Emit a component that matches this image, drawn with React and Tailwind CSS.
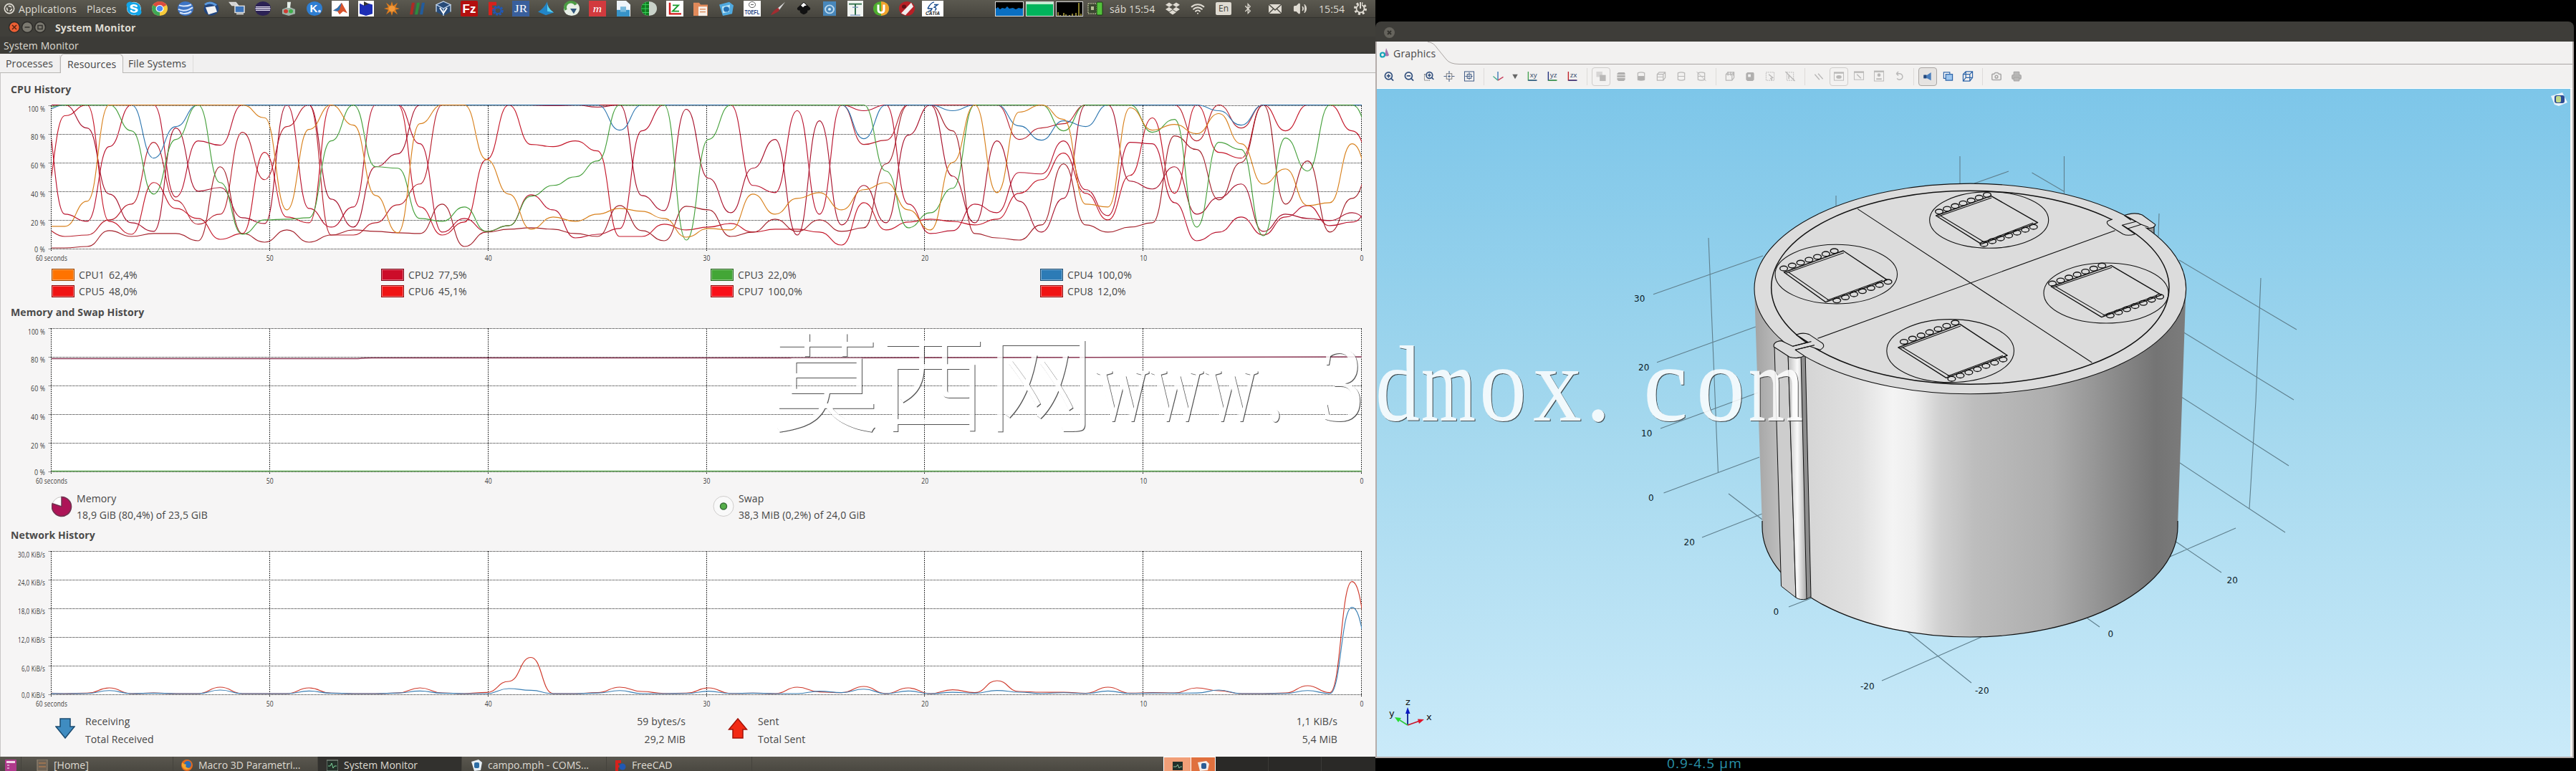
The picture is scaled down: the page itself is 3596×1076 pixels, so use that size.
import { FaSkype, FaDropbox, FaBluetoothB } from "react-icons/fa";
import {
  Wifi,
  Volume2,
  ZoomIn,
  ZoomOut,
  Camera,
  Printer,
} from "lucide-react";

// Chart geometry shared by the three history plots
const LEFT = 72;
const RIGHT = 1901;
const TOP = 7.5;
const BOTTOM = 207.5;

const CPU = [
  {
    color: "#b9222f",
    values: [14, 8.5, 9.5, 20, 31, 74, 33.5, 17, 24, 81, 48, 85, 100, 9.5, 9.5, 18, 30.5, 45, 100, 100, 100, 100, 100, 99.5, 100, 100, 100, 100, 100, 100, 100, 100, 100, 100, 100, 100, 100, 72.5, 75.5, 100, 100, 100, 100, 100, 76, 84, 87, 100, 100, 100, 100, 100, 75, 100, 84, 100, 100, 100, 100, 100, 100],
  },
  {
    color: "#b9142f",
    values: [98, 24, 19, 71, 100, 100, 36, 75, 72, 100, 100, 100, 28, 15, 29, 100, 100, 73, 11.5, 21, 12, 16, 37.5, 27, 7.5, 10, 14, 82, 100, 100, 100, 100, 44, 39, 96, 24, 100, 96, 100, 31, 10.5, 12.5, 31, 25, 53, 52, 75, 41, 23, 74, 73, 32, 5.5, 11.5, 22, 9.5, 22, 30, 16, 18.5, 30],
  },
  {
    color: "#c4182a",
    values: [32, 92.5, 100, 19, 10, 46, 28, 21, 6.5, 10.5, 67, 22, 18, 100, 100, 100, 100, 29, 9.5, 18.5, 62, 100, 72.5, 71, 75, 68, 8.5, 8.5, 17, 13, 15, 17.5, 11.5, 13.5, 13.5, 11.5, 2.5, 32, 13, 18.5, 20.5, 19, 16.5, 20.5, 38.5, 48, 66.5, 38.5, 20, 51, 91, 38.5, 100, 67, 63, 100, 82, 100, 100, 82, 62],
  },
  {
    color: "#a3202a",
    values: [0.5, 0.5, 1.5, 12.5, 8.5, 10.5, 10.5, 5.5, 57, 10.5, 4.5, 13, 4.5, 9.5, 13, 12, 11, 10.5, 31, 1.5, 11.5, 13.5, 14.5, 13.5, 10.5, 8.5, 30, 12.5, 5.5, 29.5, 27, 8.5, 11.5, 20.5, 12, 20, 12, 14.5, 59, 100, 100, 82, 10.5, 7.5, 6, 16.5, 59, 16.5, 11.5, 15, 18, 78.5, 69, 34, 60, 100, 31, 61, 11.5, 35, 60],
  },
  {
    color: "#a8122c",
    values: [100, 100, 84, 38, 18, 12, 84, 40, 42.5, 21.5, 17.5, 100, 100, 34.5, 15, 57, 66, 100, 100, 100, 100, 100, 100, 99.5, 100, 98.5, 100, 37, 26.5, 97, 49, 25, 56, 76, 9.5, 89, 16.5, 44, 18, 79, 100, 50.5, 18, 75, 33, 11.5, 35, 100, 100, 47, 41.5, 57, 24, 35.5, 45, 12, 24, 21, 19.5, 25, 17],
  },
  {
    color: "#2f77b0",
    values: [96, 100, 100, 100, 100, 63, 85, 100, 100, 100, 100, 100, 100, 100, 100, 100, 100, 100, 100, 100, 100, 100, 100, 100, 100, 100, 82.5, 100, 100, 100, 100, 100, 100, 100, 100, 100, 100, 76.5, 100, 100, 100, 96, 100, 100, 85.5, 75.5, 89, 85, 100, 100, 100, 100, 100, 96, 86, 100, 100, 100, 100, 100, 100],
  },
  {
    color: "#46a03c",
    values: [98, 100, 100, 100, 82, 38, 76, 100, 46, 10, 20, 20.5, 21.5, 75, 100, 57, 56, 21, 19, 29, 12, 16, 36.5, 44, 50, 61, 100, 100, 100, 6, 76, 100, 100, 100, 100, 100, 100, 100, 54, 14.5, 25, 42, 100, 100, 100, 100, 82, 100, 100, 100, 81, 90, 15, 74, 69, 9, 77, 54, 100, 100, 78],
  },
  {
    color: "#d8801c",
    values: [15.5, 15.5, 33, 100, 100, 100, 100, 100, 100, 100, 91, 27, 83, 100, 86, 37, 11, 87, 100, 100, 62, 38, 13.5, 22, 19, 24, 28, 26, 21, 8, 14, 13, 38, 24, 35, 39, 27, 41, 46, 27, 13, 60, 100, 39, 95, 100, 90, 31, 29, 98, 82.5, 86.5, 80, 94, 73, 45, 55.5, 30, 32, 73, 46],
  },
];

const NETWORK = [
  {
    color: "#cf3a2c",
    values: [1, 0.5, 0.8, 4.5, 0.5, 0.9, 0.5, 0.5, 5, 0.5, 0.5, 0.5, 4.5, 0.8, 0.5, 0.5, 0.9, 4.5, 1, 0.5, 1.3, 9, 25.7, 0.5, 0.5, 1.2, 5, 2, 0.6, 0.8, 4.5, 0.6, 0.8, 0.5, 5, 1.7, 1.2, 5.5, 0.5, 4.5, 0.5, 3.2, 1.2, 9.5, 2, 1.5, 1.4, 0.7, 5, 0.8, 1.2, 1, 4.5, 2.5, 0.5, 0.5, 0.9, 6, 1.2, 78.5, 30],
  },
  {
    color: "#3a7fb4",
    values: [0.6, 0.5, 0.6, 2.6, 0.5, 0.8, 0.5, 0.5, 3, 0.5, 0.5, 0.5, 2.3, 0.8, 0.5, 0.5, 0.9, 2.3, 0.8, 0.5, 0.5, 4, 2.8, 0.5, 0.5, 0.9, 2.6, 0.5, 0.5, 0.6, 2.2, 0.6, 0.8, 0.5, 0.5, 2.2, 1.2, 3.6, 0.5, 2.3, 0.5, 1.4, 0.8, 2.7, 1.5, 0.6, 1.1, 0.6, 2.3, 0.6, 0.9, 0.8, 0.9, 3, 0.5, 0.5, 0.6, 2.6, 0.5, 60.5, 22],
  },
];

const LEGEND = [
  ["CPU1", "62,4%", "bg-[#ff7300]", "border-[#9a4500]"],
  ["CPU2", "77,5%", "bg-[#cc0c29]", "border-[#7b0718]"],
  ["CPU3", "22,0%", "bg-[#43a636]", "border-[#286420]"],
  ["CPU4", "100,0%", "bg-[#2c7bb6]", "border-[#1a4a6e]"],
  ["CPU5", "48,0%", "bg-[#f01414]", "border-[#900c0c]"],
  ["CPU6", "45,1%", "bg-[#f01414]", "border-[#900c0c]"],
  ["CPU7", "100,0%", "bg-[#f91019]", "border-[#900c0c]"],
  ["CPU8", "12,0%", "bg-[#f01414]", "border-[#900c0c]"],
];

const yOf = (v) => BOTTOM - 0.5 - v * 2.005;

function curve(values) {
  const x0 = 59.6;
  const step = 30.98;
  let d = `M${x0},${yOf(values[0])}`;
  for (let i = 1; i < values.length; i++) {
    const x = x0 + step * i;
    const mid = x - step / 2;
    d += ` C${mid},${yOf(values[i - 1])} ${mid},${yOf(values[i])} ${x},${yOf(values[i])}`;
  }
  return d;
}

function Chart({ id, labels, labelWidths, children }) {
  const ticks = ["60 seconds", "50", "40", "30", "20", "10", "0"];
  return (
    <svg width="1916" height="230" className="block" fontFamily="Open Sans, sans-serif">
      <clipPath id={id}>
        <rect x={LEFT} y="0" width={RIGHT - LEFT} height="212" />
      </clipPath>
      <rect x={LEFT} y={TOP} width={RIGHT - LEFT} height={BOTTOM - TOP} fill="#fff" />
      <g stroke="#000" strokeWidth="1">
        {labels.map((l, i) => (
          <line key={l} x1={LEFT - 4} x2={RIGHT} y1={TOP + i * 40} y2={TOP + i * 40} strokeDasharray="1 1" opacity="0.85" />
        ))}
        {ticks.map((t, i) => {
          const x = Math.round(LEFT + (i * (RIGHT - LEFT)) / 6) - 0.5;
          return <line key={t} x1={x} x2={x} y1={TOP} y2={BOTTOM + 3} strokeDasharray="1.5 1.5" />;
        })}
      </g>
      <g clipPath={`url(#${id})`} fill="none" strokeWidth="1.15">
        {children}
      </g>
      <g fontSize="10" fill="#3c3c3c">
        {labels.map((l, i) => (
          <text
            key={l}
            x="63"
            y={i === 0 ? 15.5 : i === 5 ? 211.5 : 14.5 + i * 40}
            textAnchor="end"
            textLength={labelWidths[i]}
            lengthAdjust="spacingAndGlyphs"
          >
            {l}
          </text>
        ))}
        {ticks.map((t, i) => (
          <text
            key={t}
            x={LEFT + (i * (RIGHT - LEFT)) / 6}
            y="223.5"
            textAnchor="middle"
            textLength={i === 0 ? 44 : i === 6 ? 5 : 10}
            lengthAdjust="spacingAndGlyphs"
          >
            {t}
          </text>
        ))}
      </g>
    </svg>
  );
}

function Heading({ children }) {
  return <h2 className="h-6 pl-[14px] text-[14px] leading-6 font-bold text-[#4a4a4a]">{children}</h2>;
}

const PERCENT = ["100 %", "80 %", "60 %", "40 %", "20 %", "0 %"];
const RATES = ["30,0 KiB/s", "24,0 KiB/s", "18,0 KiB/s", "12,0 KiB/s", "6,0 KiB/s", "0,0 KiB/s"];

/* Launchers, drawn in a 24x24 box */
const LAUNCHERS = [
  <g><circle cx="12" cy="12" r="10" fill="#fff" /><FaSkype x="0" y="0" size={24} color="#12a5e8" /></g>,
  <g><circle cx="12" cy="12" r="11" fill="#f7cb3b" /><path d="M12 12L2.5 6.500A11 11 0 0121.500 6.500z" fill="#dd4b3e" /><path d="M12 12L2.500 6.500A11 11 0 0012 23z" fill="#3fa757" /><circle cx="12" cy="12" r="5.500" fill="#fff" /><circle cx="12" cy="12" r="4.300" fill="#4a8af4" /></g>,
  <g><circle cx="12" cy="12" r="11" fill="#3d74c4" /><path d="M3 7q8 3 17-1M2 13q10 5 20-3M4 18q9 4 16-2" stroke="#dbe8fa" strokeWidth="2.200" fill="none" /></g>,
  <g><circle cx="12" cy="12" r="10.500" fill="#21457f" /><path d="M4 10l13-2 3 9-12 4z" fill="#f2f2f2" /><path d="M3 6q7-6 16 1" stroke="#5c9ade" strokeWidth="3" fill="none" /></g>,
  <g><rect x="9" y="8" width="13" height="10" fill="#3a72b8" stroke="#ddd" strokeWidth="1.500" /><path d="M2 3h8l3 4H5zM11 20h10" stroke="#ddd" strokeWidth="2" fill="#ccc" /></g>,
  <g><circle cx="12" cy="12" r="11" fill="#2c2255" /><path d="M2 9.500h20M1.500 12h21M2 14.500h20" stroke="#e8e4f4" strokeWidth="1.400" /></g>,
  <g><path d="M3 13l9-4 9 4v7l-9 3-9-3z" fill="#9fb3a8" /><path d="M10 2h5l-1 9h-4z" fill="#e6efe9" /><circle cx="8" cy="16" r="3" fill="#cf3c32" /><circle cx="15" cy="16" r="3" fill="#3fae4a" /></g>,
  <g><circle cx="12" cy="12" r="11" fill="#2e7ed2" /><text x="11" y="18" fontSize="15" fontWeight="bold" textAnchor="middle" fill="#fff">K</text><circle cx="19" cy="16" r="2" fill="#cfe2ff" /></g>,
  <g><rect width="24" height="24" fill="#fff" /><path d="M2 15l6-4L14 3l8 16-6-3-5 5-3-5z" fill="#d9532c" /><path d="M2 15l6-4 6-8-3 11-3 2z" fill="#3172b0" /></g>,
  <g><rect x="1" width="22" height="24" fill="#fff" /><path d="M3 4l6 3 6-3 6 2v14l-9 3-9-3z" fill="#1c2db4" /><path d="M9 1l7 4-7 3z" fill="#333" /></g>,
  <g><path d="M12 1l2 7 6-5-3 7 6 2-6 2 3 7-6-5-2 7-2-7-6 5 3-7-6-2 6-2-3-7 6 5z" fill="#dd7c1d" /><circle cx="12" cy="12" r="4.500" fill="#f1993b" /></g>,
  <g><path d="M4 3h4L5 21H1z" fill="#ad2a24" /><path d="M11 3h4l-3 18H8z" fill="#2d8b3e" /><path d="M18 3h4l-3 18h-4z" fill="#235c9c" /></g>,
  <g><path d="M12 1l10 5v11l-10 6-10-6V6z" fill="#284b78" /><path d="M12 1l10 5-10 6L2 6zM12 12v11M2 6v11M22 6v11" stroke="#c4d9f2" strokeWidth="1.300" fill="none" /><path d="M7 11l5 8 5-8" stroke="#fff" strokeWidth="2" fill="none" /></g>,
  <g><rect width="24" height="24" rx="2" fill="#b30f0f" /><text x="12" y="19" fontSize="18" fontWeight="bold" textAnchor="middle" textLength="19" lengthAdjust="spacingAndGlyphs" fill="#fff">Fz</text></g>,
  <g><path d="M3 2h11v5H8v4h5v4H8v7H3z" fill="#d8211c" /><circle cx="16" cy="15" r="6" fill="none" stroke="#2158b4" strokeWidth="3.500" strokeDasharray="3 1.500" /><circle cx="16" cy="15" r="4.500" fill="none" stroke="#2158b4" strokeWidth="2" /></g>,
  <g><rect width="24" height="24" fill="#395f9c" /><text x="12" y="18" fontSize="17" fontFamily="Liberation Serif, serif" textAnchor="middle" fill="#fff">JR</text></g>,
  <g><path d="M14 1q-1 9 9 17l-11 4-11-5Q9 12 14 1z" fill="#2285c7" /><path d="M14 1q-1 9 9 17l-9-2z" fill="#5bd0ef" /></g>,
  <g><circle cx="12" cy="12" r="11" fill="#e7efe6" /><path d="M4 14a8 8 0 0114-8" stroke="#4b9b44" strokeWidth="4" fill="none" /><path d="M10 12h9l-4 8z" fill="#31567c" /></g>,
  <g><rect width="24" height="24" fill="#d23a3e" /><text x="12" y="17" fontSize="17" fontFamily="Liberation Serif, serif" fontStyle="italic" textAnchor="middle" fill="#fff">m</text></g>,
  <g><path d="M3 0h13l6 6v18H3z" fill="#eef5fa" /><rect x="3" y="14" width="18" height="10" fill="#3793c8" /><rect x="8" y="9" width="8" height="8" fill="#79b9dc" /></g>,
  <g><circle cx="12" cy="12" r="11" fill="#c9d2c9" /><path d="M12 1a11 11 0 000 22z" fill="#0f7a1f" /><path d="M1 12h11M3 6h9M3 18h9M7 2v20" stroke="#3cd45c" strokeWidth="1" /></g>,
  <g><rect width="24" height="24" fill="#fff" /><path d="M5 3v17h16" stroke="#d21b1b" strokeWidth="2.500" fill="none" /><path d="M9 7h8L9 16h9" stroke="#1b9b2d" strokeWidth="2" fill="none" /></g>,
  <g><path d="M2 3h8l2 3h10v17H2z" fill="#e28a5a" /><rect x="9" y="9" width="12" height="14" fill="#f7efe9" /><path d="M11 13h8M11 17h8" stroke="#d9824f" strokeWidth="1.500" /></g>,
  <g><path d="M2 6l14-4 6 5-2 13-13 3z" fill="#4fa9df" /><path d="M6 9l11-3-1 11-9 2z" fill="#bce5f8" /><circle cx="12" cy="13" r="4" fill="#2671b3" /></g>,
  <g><rect width="24" height="24" fill="#fff" /><circle cx="12" cy="6" r="4.500" fill="none" stroke="#555" /><path d="M10 6h4" stroke="#555" /><text x="12" y="21" fontSize="9" fontWeight="bold" textAnchor="middle" textLength="21" lengthAdjust="spacingAndGlyphs" fill="#1c3d80">TOEFL</text></g>,
  <g><path d="M22 2L14 14l-3-2z" fill="#ddd" /><path d="M12 11q3 2 1 5-4 3-11 6 4-8 10-11z" fill="#a22c30" /></g>,
  <g><path d="M12 2l9 9q1 4-4 4 2 3-5 6-7-3-5-6-5 0-4-4z" fill="#111" /><path d="M12 3l4 4-3 1-2 2-3-3z" fill="#fff" /></g>,
  <g><rect x="3" y="1" width="18" height="22" fill="#4887ba" /><circle cx="12" cy="13" r="6" fill="none" stroke="#bad9ef" strokeWidth="2" /><circle cx="12" cy="13" r="2" fill="#d9ecf8" /></g>,
  <g><rect x="1" width="22" height="24" fill="#f1f4f1" /><path d="M12 4v18M3 5h18" stroke="#2c6b46" strokeWidth="2" /><path d="M5 22h14M8 10h8" stroke="#718fb9" strokeWidth="1.300" /></g>,
  <g><circle cx="12" cy="12" r="11" fill="#4fae2f" /><path d="M12 1a11 11 0 010 22z" fill="#f1a22d" /><path d="M8 6v8q0 4 4 4t4-4V6" stroke="#fff" strokeWidth="3" fill="none" /></g>,
  <g><circle cx="12" cy="12" r="11" fill="#b81f25" /><path d="M4 19L18 3l3 6L10 22z" fill="#f1eded" /><circle cx="8" cy="9" r="3" fill="#641016" /></g>,
  <g><rect x="-3" width="30" height="24" fill="#fff" /><path d="M5 12q4-9 9-10M5 12h6q-1 4-5 4M14 6h5l-5 4q5 1 1 5" stroke="#174a8c" strokeWidth="1.500" fill="none" /><text x="12" y="21.500" fontSize="7" fontStyle="italic" fontWeight="bold" textAnchor="middle" textLength="20" lengthAdjust="spacingAndGlyphs" fill="#222">CATIA</text></g>,
];

function TopPanel() {
  return (
    <div className="flex h-[25px] items-center border-b border-[#33322e] bg-linear-to-b from-[#5b5950] to-[#47453e] text-[14px] tracking-[0.1px] text-[#dfdbd2]">
      <svg width="16" height="16" viewBox="0 0 24 24" className="ml-[5px]" fill="none" stroke="#dfdbd2">
        <circle cx="12" cy="12" r="10" strokeWidth="2.5" />
        <circle cx="12" cy="12" r="5" strokeWidth="2.5" strokeDasharray="7 3.5" />
      </svg>
      <span className="ml-[5px] w-[95px] whitespace-nowrap">Applications</span>
      <span className="w-[48px]">Places</span>
      <div className="flex">
        {LAUNCHERS.map((icon, i) => (
          <div key={i} className="flex w-[35.98px] justify-center">
            <svg width="24" height="22" viewBox="0 0 24 24" preserveAspectRatio="none" className="overflow-visible" fontFamily="Liberation Sans, sans-serif">
              {icon}
            </svg>
          </div>
        ))}
      </div>
      <div className="ml-[69px] flex gap-[3px]">
        <svg width="40" height="21" className="border border-[#d9d9d9] bg-black">
          <path d="M0 21V9l3-2 3 3 3-2 4 1 3-3 3 3 5-1 4 2 4-2 4 1 4-2v14z" fill="#0a6fc2" />
        </svg>
        <svg width="39" height="21" className="border border-[#d9d9d9] bg-[#00b45c]">
          <rect width="39" height="3" fill="#c0ecd1" />
        </svg>
        <svg width="38" height="21" className="border border-[#d9d9d9] bg-black">
          <path d="M2 20v-6M5 20v-2M10 20v-5M13 20v-3M18 20v-2M22 20v-4M27 20v-5M31 20V1M34 20v-4" stroke="#e4d44c" strokeWidth="1.2" />
        </svg>
      </div>
      <svg width="24" height="20" viewBox="0 0 24 20" className="ml-[4px]">
        <rect x="3" y="3" width="12" height="14" fill="#3c4731" stroke="#d7dab0" strokeDasharray="2 1" />
        <rect x="7" y="7" width="4" height="5" fill="#b6bd94" />
        <rect x="15" y="1" width="8" height="18" rx="1" fill="#54c23c" stroke="#173d10" />
      </svg>
      <span className="ml-[9px] w-[73px] whitespace-nowrap">sáb 15:54</span>
      <FaDropbox size={20} className="mr-[15px] ml-[5px]" />
      <Wifi size={20} strokeWidth={2.5} className="mr-[15px]" />
      <span className="h-[18px] w-[22px] rounded-xs bg-[#dfdbd2] text-center text-[12px] leading-[18px] text-[#45433d]">En</span>
      <FaBluetoothB size={16} className="ml-[15px]" />
      <svg width="18" height="13" className="ml-[21px]">
        <rect width="18" height="13" fill="#dfdbd2" />
        <path d="M0 0l9 8 9-8M0 13l7-7M18 13l-7-7" stroke="#4a4841" strokeWidth="1.4" fill="none" />
      </svg>
      <Volume2 size={20} fill="#dfdbd2" strokeWidth={1.8} className="ml-[16px]" />
      <span className="ml-[16px] w-[48px]">15:54</span>
      <svg width="20" height="20" viewBox="0 0 20 20" fill="none" stroke="#dfdbd2">
        <circle cx="10" cy="10" r="7.500" strokeWidth="3" strokeDasharray="3 2.900" />
        <circle cx="10" cy="10" r="5.500" strokeWidth="1.800" />
        <path d="M10 1v9" strokeWidth="4" stroke="#504e46" />
        <path d="M10 1v9" strokeWidth="2" />
      </svg>
    </div>
  );
}

function Amount({ label, total, rate, sum, up }) {
  return (
    <div className="flex h-[50px]">
      <svg width="28" height="30" viewBox="0 0 28 30" className="mt-[8px] ml-[1px]">
        {up ? (
          <path d="M14 1l12.500 15H21v12H7V16H1.500z" fill="#f32a14" stroke="#a31208" strokeWidth="1.500" />
        ) : (
          <path d="M14 28L1 12h6V1h14v11h6z" fill="#3f8cc1" stroke="#1b4b70" strokeWidth="1.500" />
        )}
      </svg>
      <div className="ml-[14px] flex-1 text-[14px] leading-[25px]">
        <div className="flex justify-between">
          <span>{label}</span>
          <span>{rate}</span>
        </div>
        <div className="flex justify-between">
          <span>{total}</span>
          <span>{sum}</span>
        </div>
      </div>
    </div>
  );
}

function SystemMonitor() {
  return (
    <div className="flex h-[1031px] w-[1920px] flex-col bg-[#f6f5f5] text-[14px] tracking-[0.12px] text-[#454545]">
      <div className="flex h-[26px] shrink-0 items-center bg-[#403f3a] pl-3 text-[#dfdbd2]">
        <svg width="54" height="18" fill="none" strokeWidth="1.5">
          <circle cx="8" cy="9" r="7.500" fill="#ec5f34" stroke="#2c2b28" />
          <path d="M5 6l6 6M11 6l-6 6" stroke="#5b2412" />
          <circle cx="26" cy="9" r="7.500" fill="#7b7970" stroke="#2c2b28" />
          <path d="M22.500 9h7" stroke="#33322e" />
          <circle cx="44" cy="9" r="7.500" fill="#7b7970" stroke="#2c2b28" />
          <rect x="41" y="6.500" width="6" height="5" stroke="#33322e" />
        </svg>
        <span className="ml-[11px] font-bold">System Monitor</span>
      </div>
      <div className="h-[24px] shrink-0 bg-[#3c3b37] pl-[5px] leading-[26px] text-[#dfdbd2]">System Monitor</div>
      <div className="flex h-[27px] shrink-0 items-end border-b border-[#b9b7b5] bg-[#f1f0f0]">
        <div className="h-[24px] w-[84px] border-r border-[#dedcdb] pl-2 leading-[24px]">Processes</div>
        <div className="-mb-px h-[27px] w-[88px] rounded-t-md border border-b-0 border-[#b9b7b5] bg-[#f6f5f5] pl-[9px] leading-[27px]">Resources</div>
        <div className="h-[24px] w-[98px] border-r border-[#dedcdb] pl-[7px] leading-[24px]">File Systems</div>
      </div>

      <div className="flex flex-1 flex-col border-l border-[#c9c7c6] pt-[11px] [&>*]:shrink-0">
        <Heading>CPU History</Heading>
        <div className="-ml-px mt-[3px]">
          <Chart id="cpu" labels={PERCENT} labelWidths={[24, 20, 20, 20, 20, 15]}>
            {CPU.map((s) => (
              <path key={s.color} d={curve(s.values)} stroke={s.color} />
            ))}
          </Chart>
        </div>
        <div className="mt-[5px] ml-[71px] grid w-[1840px] grid-cols-4 gap-y-[6px]">
          {LEGEND.map(([name, value, fill, border]) => (
            <div key={name} className="flex h-[17px] items-center">
              <span className={`h-[17px] w-8 border p-px ${border} ${fill} inset-ring inset-ring-white/40`} />
              <span className="ml-[6px] w-[42px]">{name}</span>
              <span>{value}</span>
            </div>
          ))}
        </div>

        <div className="mt-[9px]">
          <Heading>Memory and Swap History</Heading>
        </div>
        <div className="-ml-px mt-[3px]">
          <Chart id="memory" labels={PERCENT} labelWidths={[24, 20, 20, 20, 20, 15]}>
            <path d="M72 49.500H500Q510 48.500 520 48.500H1160Q1190 47 1901 47" stroke="#8d3a57" strokeWidth="1.500" />
            <path d="M72 206.500H1901" stroke="#5da852" strokeWidth="1.500" />
          </Chart>
        </div>
        <div className="mt-[3px] ml-[71px] grid h-[44px] w-[1846px] grid-cols-2">
          <div className="flex leading-[23px]">
            <svg width="30" height="32" viewBox="0 0 30 32" className="mt-[7px] mr-[5px]">
              <circle cx="14" cy="16" r="13.500" fill="#fff" stroke="#c6c4c3" />
              <path d="M14 16V2.500A13.500 13.500 0 11 1.200 11.800z" fill="#ad1457" stroke="#6f3450" strokeWidth="1.500" />
            </svg>
            <div>
              <div>Memory</div>
              <div>18,9 GiB (80,4%) of 23,5 GiB</div>
            </div>
          </div>
          <div className="flex leading-[23px]">
            <svg width="30" height="32" viewBox="0 0 30 32" className="mt-[7px] mr-[6px]">
              <circle cx="15" cy="15.500" r="14" fill="#f9f9f9" stroke="#cfcdcc" />
              <circle cx="15" cy="15.500" r="4.500" fill="#55ae49" stroke="#3a6f3a" strokeWidth="1.500" />
            </svg>
            <div>
              <div>Swap</div>
              <div>38,3 MiB (0,2%) of 24,0 GiB</div>
            </div>
          </div>
        </div>

        <div className="mt-[7px]">
          <Heading>Network History</Heading>
        </div>
        <div className="-ml-px mt-[3px]">
          <Chart id="network" labels={RATES} labelWidths={[38, 38, 38, 38, 33, 33]}>
            {NETWORK.map((s) => (
              <path key={s.color} d={curve(s.values)} stroke={s.color} />
            ))}
          </Chart>
        </div>
        <div className="mt-[2px] ml-[75px] grid w-[1791px] grid-cols-[881px_852px] gap-x-[58px]">
          <Amount label="Receiving" total="Total Received" rate="59 bytes/s" sum="29,2 MiB" />
          <Amount up label="Sent" total="Total Sent" rate="1,1 KiB/s" sum="5,4 MiB" />
        </div>
      </div>
    </div>
  );
}

function Task({ className, icon, children }) {
  return (
    <div className={`flex items-center border-r border-[#45433d] pt-[4px] ${className}`}>
      <svg width="16" height="16" viewBox="0 0 16 16" className="mr-[8px] shrink-0">{icon}</svg>
      <span className="whitespace-nowrap">{children}</span>
    </div>
  );
}

function Taskbar() {
  return (
    <div className="flex h-5 w-[1920px] overflow-hidden bg-linear-to-b from-[#5a574f] to-[#4a4841] text-[14px] leading-5 text-[#dfdbd2]">
      <div className="w-[30px] border-r border-[#45433d] pt-[4px] pl-[7px]">
        <svg width="16" height="16"><rect width="16" height="16" rx="1" fill="#b03a8c" /><rect x="2" y="2" width="12" height="3" fill="#f0d5e6" /><path d="M3 8h3M3 12h3" stroke="#fff" /></svg>
      </div>
      <Task className="w-[212px] pl-[21px]" icon={<><rect x="1" width="14" height="16" fill="#6d6255" stroke="#9b8b78" /><path d="M3 5h10M3 10h10" stroke="#a97a52" strokeWidth="1.500" /></>}>[Home]</Task>
      <Task className="w-[202px] pl-[11px]" icon={<><circle cx="8" cy="8" r="8" fill="#e66a1c" /><circle cx="9" cy="7" r="5" fill="#2e6fb5" /><path d="M1 4q3 3 6 3-3 5 6 5-8 5-12-3z" fill="#f6a52b" /></>}>Macro 3D Parametri...</Task>
      <Task className="w-[201px] bg-[#32312e] pl-[12px]" icon={<><rect width="16" height="15" y="1" fill="#233029" stroke="#9aa79b" /><path d="M2 9h3l2-4 2 7 2-3h3" stroke="#7ed39a" fill="none" /></>}>System Monitor</Task>
      <Task className="w-[202px] pl-[12px]" icon={<><path d="M1 3l10-3 5 4-2 11-9 1z" fill="#e6eef4" /><rect x="5" y="4" width="7" height="8" rx="2" fill="#2c6da5" /></>}>campo.mph - COMS...</Task>
      <Task className="w-[203px] pl-[11px]" icon={<><path d="M1 1h8v4H5v3h3v3H5v5H1z" fill="#d8211c" /><circle cx="11" cy="10" r="4.500" fill="#2158b4" /></>}>FreeCAD</Task>
      <div className="w-[574px]" />
      <div className="flex w-[39px] items-center justify-center border border-b-0 border-white bg-[#f19f78] pt-1">
        <svg width="14" height="12"><rect width="14" height="12" fill="#23302b" /><path d="M1 7h4l2-3 2 5 2-2h2" stroke="#8ec2a0" fill="none" /></svg>
      </div>
      <div className="flex w-[34px] items-center justify-center border border-b-0 border-l-0 border-white bg-[#e0703e] pt-1">
        <svg width="18" height="14"><path d="M1 2l12-2 4 4-2 9-11 1z" fill="#f3ece8" /><rect x="6" y="3" width="7" height="8" rx="2" fill="#2c5d95" /></svg>
      </div>
      <div className="w-[74px] border-r border-[#3b3a37] bg-[#2a2927]" />
      <div className="w-[74px] border-r border-[#3b3a37] bg-[#2a2927]" />
      <div className="flex-1 bg-[#2a2927]" />
    </div>
  );
}

/* Toolbar glyphs, 16x16 */
const ghost = "#b9b8b7";
const cube = <path d="M2 5l3-3h9v8l-3 4H2zM2 5h9v9M11 5l3-3" fill="none" stroke={ghost} strokeWidth="1.3" />;
const drum = <path d="M3 3q5-2 10 0v10q-5 2-10 0zM3 8h10" fill="none" stroke={ghost} strokeWidth="1.3" />;
const solid = <path d="M2 4l2-2h9l1 2v9l-2 2H4l-2-2z" fill="#b0afae" />;
const axis = (name, color, left) => (
  <>
    <path d="M2 1v13h12" fill="none" stroke={left} strokeWidth="1.5" />
    <path d="M2 14h13" stroke={color} strokeWidth="1.5" />
    <text x="4.500" y="10" fontSize="9.5" textLength="10.500" lengthAdjust="spacingAndGlyphs" fill="#2f4566">{name}</text>
  </>
);
const fitArrows = <path d="M8 0v16M0 8h16" stroke="#4d6489" strokeWidth="1.2" strokeDasharray="4 8" />;

const TOOLS = [
  [
    [<ZoomIn size={16} color="#35527f" strokeWidth={2.8} />],
    [<ZoomOut size={16} color="#35527f" strokeWidth={2.8} />],
    [<><path d="M1 5v9h9M1 5h3" stroke="#666" strokeDasharray="2 1" fill="none" /><ZoomIn size={14} x="2" color="#35527f" strokeWidth={3} /></>],
    [<><rect x="4" y="4" width="8" height="8" fill="none" stroke="#777" />{fitArrows}<path d="M6 8h4M8 6v4" stroke="#35527f" /></>],
    [<><rect x="1" y="1" width="14" height="14" fill="none" stroke="#35527f" /><path d="M8 2v12M2 8h12" stroke="#35527f" strokeDasharray="3 1" /><rect x="5" y="5" width="6" height="6" fill="none" stroke="#35527f" /></>],
  ],
  [
    [<><path d="M8 1v12" stroke="#3d78b5" strokeWidth="1.500" /><path d="M8 14l8-5" stroke="#c9405d" strokeWidth="1.500" /><path d="M8 14L1 8" stroke="#4bae8e" strokeWidth="1.500" /></>],
    [<path d="M4 5h8l-4 7z" fill="#666" />, "arrow"],
    [axis("xy", "#2c4f88", "#49a455")],
    [axis("yz", "#3ea143", "#26347f")],
    [axis("zx", "#26347f", "#c1272d")],
  ],
  [
    [<><path d="M1 1h9v8H1z" fill="#d6d5d4" /><path d="M6 6h9v9H6z" fill={ghost} /></>, "boxed"],
    [<>{solid}<path d="M1 6h14M1 10h14" stroke="#f1f0f0" /></>],
    [<>{drum}<path d="M3 8h10v6H3z" fill="#b0afae" /></>],
    [<>{cube}<path d="M2 9h9" stroke={ghost} /></>],
    [drum],
    [<>{drum}<path d="M1 1l14 14" stroke={ghost} /></>],
  ],
  [
    [<>{cube}<path d="M5 1v6M9 1v6M13 1v6" stroke={ghost} strokeWidth="1.500" /></>],
    [<>{solid}<path d="M5 5h4v4H5z" fill="#f1f0f0" /></>],
    [<><rect x="2" y="2" width="12" height="12" fill="none" stroke={ghost} strokeDasharray="2 1" /><path d="M6 5l6 5-3 1 2 3" fill="none" stroke={ghost} strokeWidth="1.500" /></>],
    [<><rect x="3" y="2" width="10" height="12" fill="none" stroke={ghost} strokeDasharray="2 1" /><path d="M1 1l14 14M6 5v7" stroke={ghost} strokeWidth="1.500" /></>],
  ],
  [
    [<path d="M2 5l7 8M7 4l7 8" stroke={ghost} strokeWidth="1.500" />],
    [<><rect x="1" y="2" width="14" height="12" fill="none" stroke={ghost} /><path d="M1 3h14" stroke={ghost} strokeWidth="2" /><ellipse cx="8" cy="9" rx="4" ry="2.500" fill={ghost} /></>, "boxed"],
    [<><rect x="1" y="1" width="14" height="12" fill="none" stroke={ghost} /><path d="M1 2h14" stroke={ghost} strokeWidth="2" /><path d="M5 5l6 6" stroke={ghost} strokeWidth="1.500" /></>],
    [<><rect x="1" y="0" width="14" height="15" fill="none" stroke={ghost} /><path d="M1 1h14" stroke={ghost} strokeWidth="2" /><circle cx="8" cy="6" r="2.500" fill={ghost} /><path d="M4 12h8" stroke={ghost} strokeWidth="2" /></>],
    [<path d="M4 4h5a4.500 4.500 0 11-4 7M4 4l3-3M4 4l3 3" fill="none" stroke={ghost} strokeWidth="1.500" />],
  ],
  [
    [<><path d="M2 6h5l6-4v12L7 11H2z" fill="#4a7ebc" /><path d="M2 6h4v5H2z" fill="#25497c" /></>, "active"],
    [<><path d="M2 2h9v9H2z" fill="#fff" stroke="#2f65a8" strokeWidth="1.300" /><path d="M5 5h10v9H5z" fill="#9cc6ef" stroke="#2f65a8" strokeWidth="1.300" /></>],
    [<path d="M1 5l4-4h10v9l-4 5H1zM1 5h10v10M11 5l4-4M5 1v9h10M5 10l-4 5" fill="none" stroke="#2f65a8" strokeWidth="1.300" />],
  ],
  [
    [<Camera size={16} color="#a9a8a7" strokeWidth={2.5} />],
    [<Printer size={16} color="#a9a8a7" fill="#b9b8b7" strokeWidth={2} />],
  ],
];

function Tool({ glyph, kind }) {
  let box = "flex h-[26px] w-7 items-center justify-center";
  if (kind === "arrow") box = "flex h-[26px] w-5 items-center justify-center";
  if (kind === "boxed") box = "mx-px flex h-[26px] w-[26px] items-center justify-center rounded border border-[#cfcdcb] bg-[#f3f2f1]";
  if (kind === "active") box = "mx-px flex h-[26px] w-[26px] items-center justify-center rounded border border-[#a9a6a3] bg-[#e5e3e1]";
  return (
    <div className={box}>
      <svg width="16" height="15" viewBox="0 0 16 16" className="overflow-visible" fontFamily="Open Sans, sans-serif">{glyph}</svg>
    </div>
  );
}

// ellipse, die outline, and the end points of both bead rows
const MODULES = [
  { c: [846, 261, 186, 118], q: [[680, 243], [852, 160], [998, 272], [822, 362]], t: [690, 226, 840, 156], b: [830, 362, 985, 290] },
  { c: [368, 488, 191, 124], q: [[205, 480], [390, 390], [527, 512], [335, 605]], t: [204, 464, 362, 391], b: [370, 598, 530, 520] },
  { c: [1212, 567, 195, 126], q: [[1040, 540], [1228, 452], [1385, 575], [1198, 668]], t: [1044, 527, 1199, 452], b: [1225, 661, 1380, 582] },
  { c: [725, 809, 199, 132], q: [[562, 795], [755, 697], [903, 828], [712, 922]], t: [580, 771, 740, 691], b: [729, 926, 890, 845] },
];

function Beads({ row: [x1, y1, x2, y2] }) {
  return Array.from({ length: 7 }, (_, i) => (
    <ellipse
      key={i}
      cx={x1 + ((x2 - x1) * i) / 6}
      cy={y1 + ((y2 - y1) * i) / 6}
      rx="12"
      ry="10"
      strokeWidth="1.400"
      vectorEffect="non-scaling-stroke"
    />
  ));
}

function Scene() {
  const labels = [
    ["30", 2282, 421], ["20", 2288, 516.5], ["10", 2292, 609], ["0", 2302, 699], ["20", 2351.5, 761], ["0", 2476.5, 858],
    ["-20", 2598, 962], ["-20", 2758, 968], ["0", 2943.5, 889], ["20", 3109.5, 814],
  ];
  return (
    <svg width="1666" height="932" viewBox="1923 124 1666 932" className="block" fontFamily="DejaVu Sans, sans-serif">
      <defs>
        <linearGradient id="sky" x1="0" y1="0" x2="0" y2="1">
          <stop offset="0" stopColor="#7dc6e9" />
          <stop offset="0.5" stopColor="#a4d8ee" />
          <stop offset="1" stopColor="#caeaf9" />
        </linearGradient>
        <linearGradient id="body" gradientUnits="userSpaceOnUse" x1="2450" y1="0" x2="3053" y2="0">
          <stop offset="0" stopColor="#a3a3a3" />
          <stop offset="0.06" stopColor="#bebebe" />
          <stop offset="0.13" stopColor="#d6d6d6" />
          <stop offset="0.24" stopColor="#e0e0e0" />
          <stop offset="0.32" stopColor="#f4f4f4" />
          <stop offset="0.37" stopColor="#ededed" />
          <stop offset="0.43" stopColor="#d0d0d0" />
          <stop offset="0.51" stopColor="#bdbdbd" />
          <stop offset="0.69" stopColor="#adadad" />
          <stop offset="0.78" stopColor="#989898" />
          <stop offset="0.93" stopColor="#747474" />
          <stop offset="1" stopColor="#7c7c7c" />
        </linearGradient>
        <linearGradient id="rail">
          <stop offset="0" stopColor="#bdbdbd" />
          <stop offset="0.5" stopColor="#fafafa" />
          <stop offset="1" stopColor="#a8a8a8" />
        </linearGradient>
      </defs>
      <rect x="1923" y="124" width="1666" height="932" fill="url(#sky)" />

      {/* Axis grid */}
      <path
        d="M2309 410.700L2462 357M2314 505.700L2452 456M2319 598L2455 548M2323.500 688L2457 638M2386 332L2399.400 659
           M2377 750L2461 717M2414 689L2461 725M2498 847L2529 835M2628 950L2767 889M2663 881L2753 953M2915 863L2932 875
           M3037 755L3102 799M3030 777L3122 737M3044 646L3191 743M3046 554L3196 650M3049.500 464L3203 558M3043 363L3207 460
           M3157 388L3150 560L3141 710M2737 218V256M2882.500 218V270M2757 256L2805 239M2837.500 241L2882 267M2564 273V287M3015 298L3014 330"
        fill="none"
        stroke="#5f7f8d"
        strokeWidth="1.1"
      />
      <g fontSize="12" fill="#0b1a26">
        {labels.map(([t, x, y]) => (
          <text key={`${x}`} x={x} y={y}>{t}</text>
        ))}
      </g>

      {/* Cylinder */}
      <path d="M2450 403L2461 735A290 154 0 003041 735L3052.500 403z" fill="url(#body)" />
      <path d="M2461 727V735A290 154 0 003041 735V727" fill="none" stroke="#111" strokeWidth="1.200" />

      {/* Side rail */}
      <path d="M2478 482L2487.500 818L2508 834L2497 490z" fill="#cdcdcd" stroke="#111" />
      <path d="M2497 494L2508 834Q2514 838 2523 836L2515 494z" fill="url(#rail)" />
      <path d="M2515 494L2523 836L2529 833L2521 490z" fill="#8e8e8e" />
      <path d="M2497 494L2508 834Q2514 838 2523 836M2515 494L2523 836L2529 833L2521 490" fill="none" stroke="#111" />

      <g transform="translate(2400 220) scale(0.4464 0.3333)" stroke="#111" strokeWidth="1.100" fill="#dcdcdc" strokeLinejoin="round">
        {/* Right lug sits behind the rim */}
        <path d="M1340 290L1362 290V330L1350 320z" fill="#999" vectorEffect="non-scaling-stroke" />
        <path d="M1262 245Q1300 225 1325 240L1366 280Q1366 297 1335 296L1300 300z" vectorEffect="non-scaling-stroke" />
        <ellipse cx="787" cy="549" rx="675" ry="440.500" vectorEffect="non-scaling-stroke" />
        <ellipse cx="787" cy="544" rx="622" ry="405" strokeWidth="1.500" vectorEffect="non-scaling-stroke" />
        <path d="M435 215L1168 858M1240 305L310 757" vectorEffect="non-scaling-stroke" />
        <path d="M1232 258L1218 265Q1210 272 1222 285L1265 320Q1280 330 1302 320L1262 283L1305 268L1270 243L1290 262M1280 297L1322 280L1345 292" vectorEffect="non-scaling-stroke" />
        {/* Left lug */}
        <path d="M243 742Q262 730 283 740L325 777Q335 792 318 805L285 790L240 805L268 830Q250 845 222 835L173 792Q170 770 197 767L232 790L280 773z" vectorEffect="non-scaling-stroke" />
        <path d="M280 773L243 742M232 790L290 770M240 805L300 785" fill="none" vectorEffect="non-scaling-stroke" />

        {MODULES.map(({ c, q, t, b }) => (
          <g key={c[0]} fill="none">
            <ellipse cx={c[0]} cy={c[1]} rx={c[2]} ry={c[3]} vectorEffect="non-scaling-stroke" />
            <path d={`M${q.join("L")}z`} strokeWidth="1.400" vectorEffect="non-scaling-stroke" />
            <path d={`M${q[0][0] + 6},${q[0][1] + 4}L${q[1][0] + 2},${q[1][1] + 8}M${q[2][0] - 14},${q[2][1] + 1}L${q[3][0] + 4},${q[3][1] - 7}`} vectorEffect="non-scaling-stroke" />
            <path d={`M${q[0][0] + 14},${q[0][1]}L${q[3][0] + 12},${q[3][1] - 6}`} vectorEffect="non-scaling-stroke" />
            <Beads row={t} />
            <Beads row={b} />
          </g>
        ))}
      </g>

      {/* Orientation triad */}
      <g strokeWidth="1.800">
        <path d="M1966 1012V993" stroke="#0b1a8c" />
        <path d="M1963 996L1966 987L1969.500 996z" fill="#0b1ac4" />
        <path d="M1966 1012L1983 1006" stroke="#c8142a" />
        <path d="M1980 1003.500L1989 1004L1982 1010z" fill="#e0142a" />
        <path d="M1966 1012L1955 1005" stroke="#32c83c" />
        <path d="M1948 1001L1957 1002L1953 1008z" fill="#28dc32" />
      </g>
      <g fontSize="13" fill="#111">
        <text x="1963" y="984">z</text>
        <text x="1940" y="1000">y</text>
        <text x="1992" y="1005">x</text>
      </g>

      {/* Corner logo */}
      <path d="M3562 134L3578 129L3585 143L3573 148L3567 146z" fill="#e9f2fa" />
      <rect x="3567" y="133" width="14" height="11" rx="3" fill="#2b4c96" />
      <rect x="3569" y="134" width="7" height="9" rx="2" fill="#c3d98a" />
    </svg>
  );
}

function GraphicsWindow() {
  return (
    <div className="flex w-[1676px] flex-col bg-black pt-[30px]">
      <div className="flex h-7 w-[1673px] items-center rounded-t-lg bg-[#3e3d39] pt-[2px] pl-[11px]">
        <svg width="17" height="17">
          <circle cx="8.500" cy="8.500" r="7.500" fill="#66645d" />
          <path d="M6 6l5 5M11 6l-5 5" stroke="#33322e" strokeWidth="2" />
        </svg>
      </div>
      <div className="flex h-[1000px] w-[1673px] flex-col border-r-2 border-b-2 border-l-2 border-[#b5adab] bg-[#f2f1f0] text-[#454545]">
        <div className="flex h-[32px] shrink-0 items-center">
          <svg width="13" height="15" className="ml-[4px]">
            <path d="M9 0l4 10q-3 3-6 0z" fill="#a775ae" />
            <circle cx="4" cy="9.500" r="3" fill="none" stroke="#15a3b8" strokeWidth="2.200" />
          </svg>
          <span className="ml-[6px] w-[62px] text-[14px] tracking-[0.2px]">Graphics</span>
          <svg width="44" height="32" className="-ml-[14px]">
            <path d="M0 0.500Q8 1 13 9L26 25Q31 31.500 44 31.500" fill="none" stroke="#aaa5a3" />
          </svg>
          <div className="h-[32px] flex-1 border-b border-[#aaa5a3]" />
        </div>
        <div className="flex h-[34px] shrink-0 items-center border-b border-white pl-[3px]">
          {TOOLS.map((group, g) => (
            <div key={g} className="flex items-center">
              {g > 0 && <div className="mx-[5.5px] h-6 w-px bg-[#dddbd9]" />}
              {group.map(([glyph, kind], i) => (
                <Tool key={i} glyph={glyph} kind={kind} />
              ))}
            </div>
          ))}
        </div>
        <Scene />
      </div>
      <p className="-mt-[3px] ml-[407px] text-[19px] leading-5 tracking-[1.1px] text-[#2a93ab]">0.9-4.5 µm</p>
    </div>
  );
}

// [character, x, width]
const BANNER = [
  ["w", 1530, 74], ["w", 1606, 74], ["w", 1682, 74], [".", 1768, 24], ["3", 1843, 60],
  ["d", 1920, 62], ["m", 1984, 76], ["o", 2065, 66], ["x", 2140, 68], [".", 2213, 36],
  ["c", 2294, 62], ["o", 2368, 68], ["m", 2441, 76],
];

function Banner() {
  return (
    <svg
      width="3596"
      height="200"
      viewBox="0 440 3596 200"
      className="pointer-events-none absolute top-[440px] left-0 opacity-85 drop-shadow-[1.5px_1.5px_0_rgba(40,40,40,0.95)]"
      fill="#fff"
    >
      <text x="1078" y="591" fontSize="150" fontWeight="300" textLength="450" fontFamily="Noto Sans CJK SC, sans-serif">莫西网</text>
      <g fontSize="150" fontFamily="Liberation Serif, serif">
        {BANNER.map(([ch, x, w]) => (
          <text key={x} x={x} y="587" textLength={w} lengthAdjust="spacingAndGlyphs">{ch}</text>
        ))}
      </g>
    </svg>
  );
}

export default function App() {
  return (
    <div className="relative flex h-[1076px] w-[3596px] overflow-hidden bg-black font-['Open_Sans',sans-serif]">
      <div className="flex w-[1920px] flex-col">
        <TopPanel />
        <SystemMonitor />
        <Taskbar />
      </div>
      <GraphicsWindow />
      <Banner />
    </div>
  );
}
